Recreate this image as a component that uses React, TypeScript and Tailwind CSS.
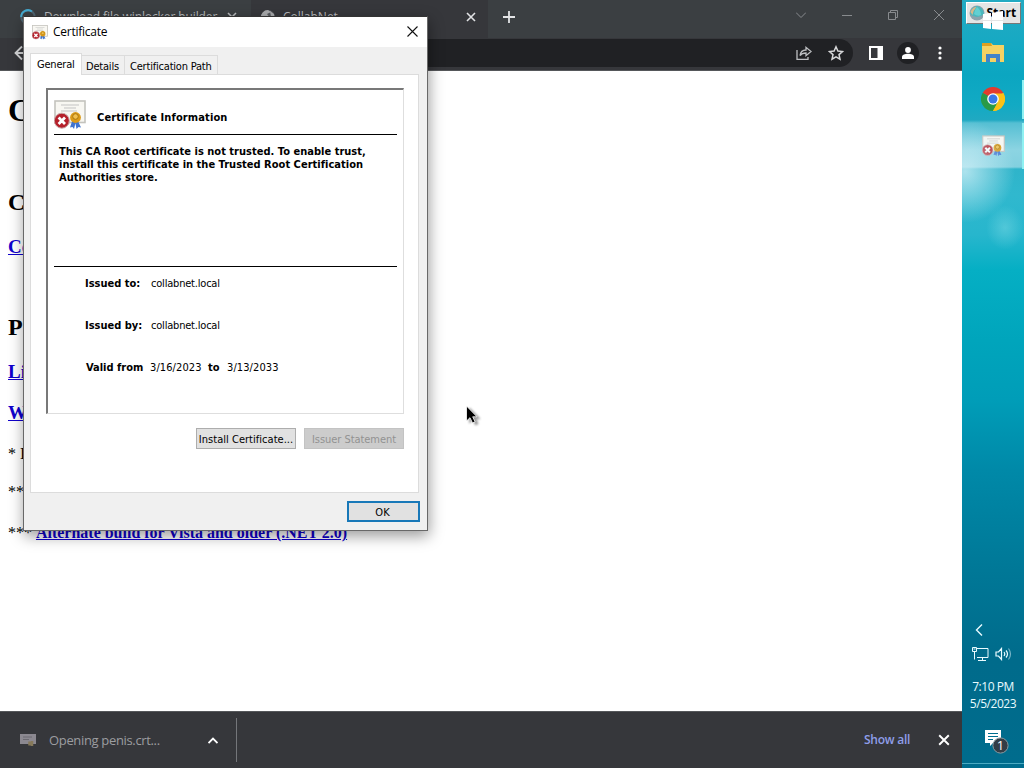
import React from 'react';

interface IconProps {
  className?: string;
}

const CertificateIcon: React.FC<IconProps> = ({ className }) => (
  <svg viewBox="0 0 32 30" className={className}>
    <rect x="1" y="1" width="30" height="21.500" fill="#f8f7f2" stroke="#c4c3bd" strokeWidth="1.6" />
    <path d="M7 5h18M10 8h12M7 11h16" stroke="#c3c3c3" strokeWidth="1" />
    <path d="M18.500 20l-2.500 7.500 2.500-.5 1.500 2 2-8zM23.500 20l3.500 7.500-2.500-.5-2 2-1.500-8z" fill="#3f74d0" />
    <circle cx="21.500" cy="17.500" r="5.400" fill="#dc9a17" />
    <circle cx="21.500" cy="16.500" r="2.800" fill="#f2c04e" stroke="#a87612" />
    <circle cx="7.800" cy="20.700" r="7.500" fill="#b5202b" stroke="#c9a9a9" strokeWidth="1" />
    <path d="M4.600 17.500l6.400 6.400M11 17.500l-6.400 6.400" stroke="#fff" strokeWidth="2.8" />
  </svg>
);

const CloseIcon: React.FC<IconProps> = ({ className }) => (
  <svg viewBox="0 0 10 10" className={className}>
    <path d="M1 1l8 8M9 1l-8 8" stroke="currentColor" strokeWidth="1.6" />
  </svg>
);

const ChromeIcon: React.FC<IconProps> = ({ className }) => (
  <svg viewBox="0 0 24 24" className={className}>
    <path d="M12 12L1.6 6A12 12 0 0 1 22.4 6z" fill="#e33b2e" />
    <path d="M12 12L22.4 6A12 12 0 0 1 12 24z" fill="#fbc116" />
    <path d="M12 12L12 24A12 12 0 0 1 1.6 6z" fill="#299a47" />
    <path d="M12 6.5h10.6L17 15z" fill="#fbc116" />
    <path d="M1.6 6l5.4 9 5-3z" fill="#299a47" />
    <path d="M7 15l5 2.5 5-2.5-5 9z" fill="#299a47" />
    <path d="M17 15l-5 9A12 12 0 0 0 22.4 6.5z" fill="#fbc116" />
    <circle cx="12" cy="12" r="5.8" fill="#fff" />
    <circle cx="12" cy="12" r="4.5" fill="#3978e7" />
  </svg>
);

const TabStrip = () => (
  <div className="flex h-[38px] shrink-0 bg-[#3b3f42] text-[12px] text-[#b8babd]">
    <div className="flex h-[34px] w-[251px] items-center pl-5">
      <svg viewBox="0 0 16 16" className="h-4 w-4">
        <circle cx="8" cy="8" r="6.8" fill="none" stroke="#4e6470" strokeWidth="2" />
        <path d="M1.2 8A6.8 6.8 0 0 1 12 2.5" fill="none" stroke="#43a9cf" strokeWidth="2" />
      </svg>
      <span className="ml-2 w-[174px] overflow-hidden whitespace-nowrap tracking-[-0.1px]">Download file winlocker builder</span>
      <CloseIcon className="ml-[9px] h-2.5 w-2.5" />
    </div>
    <div className="flex h-[38px] w-[237px] items-center bg-[#36373b] pb-1 pl-[9px]">
      <svg viewBox="0 0 16 16" className="h-4 w-4">
        <circle cx="8" cy="8" r="7" fill="#55585c" />
        <path d="M1 9A7 7 0 0 1 8 1l3 2-4 2 3 4-4 1z" fill="#a9abad" />
        <path d="M10 2l4 3 1 5-4-2z" fill="#a9abad" />
      </svg>
      <span className="ml-[7px] w-[183px]">CollabNet</span>
      <CloseIcon className="h-2.5 w-2.5 text-[#e2e3e5]" />
    </div>
    <div className="flex h-[34px] w-[42px] items-center justify-center">
      <svg viewBox="0 0 12 12" className="h-3 w-3">
        <path d="M6 0v12M0 6h12" stroke="#e3e4e6" strokeWidth="1.8" />
      </svg>
    </div>
    <div className="ml-auto flex h-[29px] items-center gap-[36px] pr-[18px] text-[#888b8e]">
      <svg viewBox="0 0 10 10" className="h-2.5 w-2.5">
        <path d="M0 2.5l5 5 5-5" fill="none" stroke="currentColor" />
      </svg>
      <svg viewBox="0 0 10 10" className="h-2.5 w-2.5">
        <path d="M0 5.5h10" stroke="currentColor" />
      </svg>
      <svg viewBox="0 0 10 10" className="h-2.5 w-2.5">
        <path d="M.5 2.5h7v7h-7zM2.5 2.5v-2h7v7h-2" fill="none" stroke="currentColor" />
      </svg>
      <svg viewBox="0 0 10 10" className="h-2.5 w-2.5">
        <path d="M0 0l10 10M10 0L0 10" stroke="currentColor" />
      </svg>
    </div>
  </div>
);

const Toolbar = () => (
  <div className="flex h-[33px] shrink-0 items-center border-b border-[#55575a] bg-[#36373b] pb-[3px]">
    <svg viewBox="0 0 16 16" className="ml-3.5 h-4 w-4">
      <path d="M15 8H2M8 1.5L1.5 8 8 14.5" fill="none" stroke="#d5d6d8" strokeWidth="1.8" />
    </svg>
    <div className="ml-10 flex h-[28px] flex-1 items-center justify-end gap-4 rounded-full bg-[#202124] pr-[9px]">
      <svg viewBox="0 0 16 16" className="h-4 w-4" fill="none" stroke="#bdbfc2" strokeWidth="1.3">
        <path d="M1 5v9.400h11V12" />
        <path d="M4 10.5C4.500 7 7 5 10 5V2.300L15 6.500l-5 4.200V8c-3 0-4.500.5-6 2.500z" />
      </svg>
      <svg viewBox="0 0 16 16" className="h-4 w-4">
        <path d="M8 1.8l1.9 4.3 4.600.4-3.500 3.100 1 4.600L8 11.800l-4 2.400 1-4.600L1.500 6.500l4.600-.4z" fill="none" stroke="#d7d8da" strokeWidth="1.5" />
      </svg>
    </div>
    <svg viewBox="0 0 14 14" className="ml-[16px] h-3.5 w-3.5">
      <path d="M0 0h14v14H0zM2 2v10h6.500V2z" fill="#fff" fillRule="evenodd" />
    </svg>
    <div className="ml-[14px] flex h-[22px] w-[22px] items-center justify-center rounded-full bg-[#202124]">
      <svg viewBox="0 0 12 12" className="h-3 w-3" fill="#fff">
        <circle cx="6" cy="3" r="2.900" />
        <path d="M0 12v-2c0-2 3-3.200 6-3.200s6 1.200 6 3.200v2z" />
      </svg>
    </div>
    <svg viewBox="0 0 4 14" className="ml-[19px] mr-5 h-3.5 w-1" fill="#fff">
      <circle cx="2" cy="2" r="1.600" />
      <circle cx="2" cy="7" r="1.600" />
      <circle cx="2" cy="12" r="1.600" />
    </svg>
  </div>
);

const Page = () => (
  <div className="flex min-h-0 flex-1 flex-col overflow-hidden whitespace-nowrap bg-white pl-2 font-['Liberation_Serif',serif] font-bold text-black">
    <div className="mt-[21px] h-9 text-[32px] leading-9">C</div>
    <div className="mt-[60px] h-7 text-[24px] leading-7">C</div>
    <div className="mt-[21px] h-5 text-[19px] leading-5 text-[#1000cc] underline">Co</div>
    <div className="mt-[56px] h-7 text-[24px] leading-7">P</div>
    <div className="mt-[21px] h-5 text-[19px] leading-5 text-[#1000cc] underline">Li</div>
    <div className="mt-[21px] h-5 text-[19px] leading-5 text-[#1000cc] underline">W</div>
    <div className="mt-[22px] h-[18px] text-[16px] font-normal leading-[18px]">* I</div>
    <div className="mt-[20px] h-[18px] text-[16px] font-normal leading-[18px]">**</div>
    <div className="mt-[23px] h-[18px] text-[16px] font-normal leading-[18px] tracking-[-0.01px]">
      *** <span className="font-bold text-[#1000cc] underline">Alternate build for Vista and older (.NET 2.0)</span>
    </div>
  </div>
);

const DownloadBar = () => (
  <div className="flex h-[57px] shrink-0 items-center border-t border-[#55575a] bg-[#36373b] text-[13px]">
    <svg viewBox="0 0 16 16" className="ml-5 h-4 w-4">
      <path d="M0 2h16v10H0z" fill="#8b8890" />
      <path d="M3 5h9M3 7.500h6" stroke="#6b6970" />
      <path d="M9.500 9.500v4M12 9v5" stroke="#86795a" strokeWidth="2.500" />
    </svg>
    <span className="ml-[13px] w-[159px] pt-[2px] tracking-[-0.34px] text-[#9c9da0]">Opening penis.crt...</span>
    <svg viewBox="0 0 10 7" className="h-[7px] w-2.5">
      <path d="M.5 6L5 1.500 9.500 6" fill="none" stroke="#fff" strokeWidth="1.800" />
    </svg>
    <div className="ml-[18px] h-[44px] w-px bg-[#74767a]" />
    <span className="ml-auto w-[74px] pb-px text-[12px] font-semibold tracking-[-0.25px] text-[#8f9ee9]">Show all</span>
    <CloseIcon className="mb-px mr-3 h-3 w-3 text-white" />
  </div>
);

const Taskbar = () => (
  <div className="relative flex w-[62px] shrink-0 flex-col items-center overflow-hidden bg-[linear-gradient(180deg,#23aac2_0px,#16a9c3_45px,#0ba6c1_75px,#12aac4_105px,#20a9c2_120px,#55bfd3_123px,#8cd4e2_150px,#82d0df_167px,#2fb4ca_169px,#30b8ce_195px,#27b6cd_235px,#05afc4_270px,#00a5bc_340px,#009db8_400px,#0089a8_470px,#007897_570px,#006b8b_660px,#006c8d_768px)] font-['Open_Sans',sans-serif] text-[#e9fbff]">
    <div className="absolute left-0 top-[122px] h-[110px] w-[62px] bg-[radial-gradient(ellipse_at_5%_45%,rgba(214,242,249,0.75),transparent_60%)]" />
    <div className="absolute left-[24px] top-[205px] h-[45px] w-[38px] bg-[radial-gradient(ellipse_at_50%_50%,rgba(130,220,230,0.45),transparent_70%)]" />
    <div className="absolute right-0 top-[80px] h-[39px] w-[2px] bg-[#8ff1f2]" />
    <div className="absolute right-0 top-[123px] h-[46px] w-[2px] bg-[#8ff1f2]" />
    <div className="mt-[2px] flex h-[22px] w-[55px] shrink-0 items-center border border-b-[#777] border-l-white border-r-[#777] border-t-white bg-[#e4e5e5] pl-[2px] text-[12px] font-bold text-black">
      <svg viewBox="0 0 16 16" className="h-4 w-4 shrink-0">
        <circle cx="8" cy="8" r="7.500" fill="#8ba3ad" />
        <path d="M1 9Q2 2 8 1q6 1 7 8-7 6-14 0z" fill="#4bb8bd" />
        <path d="M1.500 7q2-5 6-5-3 3-4 8z" fill="#d9b889" />
        <path d="M5 9q1-5 3-7 4 3 4 8-3 2-7-1z" fill="#62d0d2" />
      </svg>
      <span className="ml-[2px]">Start</span>
    </div>
    <svg viewBox="0 0 20 20" className="absolute left-[21px] top-[11px] h-5 w-5" fill="#fff">
      <path d="M0 3l8-1v7H0zM9 2l11-2v9H9zM0 10h8v8l-8-1zM9 10h11v9l-11-1z" />
    </svg>
    <svg viewBox="0 0 22 19" className="mt-[19px] h-[19px] w-[22px] shrink-0">
      <path d="M0 1q0-1 1-1h8l2 2h11v17H0z" fill="#f5d263" />
      <path d="M0 0h9l1 3H0z" fill="#dda020" />
      <path d="M4 19v-8h14v8h-4v-4H8v4z" fill="#4183c9" />
    </svg>
    <ChromeIcon className="mt-[25px] h-6 w-6 shrink-0" />
    <CertificateIcon className="mt-[24px] h-[22px] w-[23px] shrink-0" />
    <svg viewBox="0 0 8 12" className="mr-[28px] mt-[467px] h-3 w-2 shrink-0">
      <path d="M7 .5L1.500 6 7 11.500" fill="none" stroke="currentColor" strokeWidth="1.400" />
    </svg>
    <div className="mt-[10px] flex h-4 items-center gap-[6px] pr-[3px]">
      <svg viewBox="0 0 17 15" className="h-[15px] w-[17px]" fill="none" stroke="currentColor">
        <path d="M5 1.500h11v9H5M.5.500h4v4h-4zM2.500 4.500v8M10.500 10.500v3M6 13.500h8M1.500 2h2" />
      </svg>
      <svg viewBox="0 0 17 14" className="h-3.5 w-[17px]" fill="none" stroke="currentColor" strokeWidth="1.200">
        <path d="M1 5h2.500l3-3.500v11l-3-3.500H1zM9 5q1.500 2 0 4M11 3.500q3 3.500 0 7" />
        <path d="M13.500 1.500q4 5.500 0 11" opacity=".5" />
      </svg>
    </div>
    <div className="mt-[16px] whitespace-nowrap text-center text-[12px] leading-[17px] tracking-[-0.45px]">
      7:10 PM
      <br />
      5/5/2023
    </div>
    <svg viewBox="0 0 26 26" className="ml-[7px] mt-[17px] h-[26px] w-[26px] shrink-0">
      <path d="M1 1h16v13H9l-3 3v-3H1z" fill="#fff" />
      <path d="M4 4.500h10M4 7.500h10M4 10.500h5" stroke="#006d8e" />
      <circle cx="16.500" cy="16.500" r="7.600" fill="#343d46" stroke="#8b999f" />
      <text x="16.500" y="21" textAnchor="middle" fill="#fff" fontSize="13">1</text>
    </svg>
    <div className="absolute bottom-1 left-0 h-px w-full bg-[#4baac2]" />
  </div>
);

interface FieldProps {
  label: string;
  value: string;
}

const Field: React.FC<FieldProps> = ({ label, value }) => (
  <div className="flex h-[42px] leading-[14px]">
    <span className="w-[66px] font-bold">{label}</span>
    <span className="tracking-[-0.2px]">{value}</span>
  </div>
);

const CertificateDialog = () => (
  <div className="absolute left-[23px] top-4 flex h-[515px] w-[405px] flex-col whitespace-nowrap border border-[#686868] border-t-[#333] bg-[#f0f0f0] font-['DejaVu_Sans_Condensed','DejaVu_Sans',sans-serif] text-[11px] text-black shadow-[1px_5px_14px_rgba(0,0,0,0.4)]">
    <div className="flex h-[30px] shrink-0 items-center bg-white pl-2 font-['Open_Sans',sans-serif] text-[12px]">
      <CertificateIcon className="h-[15px] w-4" />
      <span className="ml-[5px] tracking-[-0.25px]">Certificate</span>
      <svg viewBox="0 0 11 11" className="mb-0.5 ml-auto mr-[9px] h-[11px] w-[11px]">
        <path d="M.5.500l10 10M10.500.500l-10 10" stroke="#111" strokeWidth="1.100" />
      </svg>
    </div>
    <div className="relative z-10 ml-[6px] mt-[6px] flex h-[22px] shrink-0 items-end tracking-[-0.2px]">
      <div className="h-[22px] w-[52px] border border-b-0 border-[#dcdcdc] bg-white pl-[6px] leading-[21px]">General</div>
      <div className="mb-px h-[19px] w-[43px] border border-b-0 border-l-0 border-[#dcdcdc] pl-1 leading-[21px]">Details</div>
      <div className="mb-px h-[19px] w-[93px] border border-b-0 border-l-0 border-[#dcdcdc] pl-[5px] leading-[21px]">Certification Path</div>
    </div>
    <div className="-mt-px ml-[6px] flex h-[419px] w-[389px] shrink-0 flex-col border border-[#dcdcdc] bg-white">
      <div className="ml-[15px] mt-[13px] flex h-[326px] w-[358px] shrink-0 flex-col border-b border-l-2 border-r border-t-2 border-b-[#dedede] border-l-[#787878] border-r-[#dedede] border-t-[#787878] pl-[6px] pr-[6px]">
        <div className="flex h-[45px] shrink-0 items-end border-b border-black pb-1">
          <CertificateIcon className="h-[30px] w-8" />
          <span className="mb-1 ml-[11px] font-bold tracking-[0.12px]">Certificate Information</span>
        </div>
        <div className="mt-[10px] h-[122px] shrink-0 border-b border-black pl-[5px] font-bold leading-[13px] tracking-[0.02px]">
          This CA Root certificate is not trusted. To enable trust,
          <br />
          install this certificate in the Trusted Root Certification
          <br />
          Authorities store.
        </div>
        <div className="mt-[10px] pl-[31px]">
          <Field label="Issued to:" value="collabnet.local" />
          <Field label="Issued by:" value="collabnet.local" />
          <div className="flex pl-px leading-[14px]">
            <span className="w-[64px] font-bold">Valid from</span>
            <span className="w-[58px] tracking-[0.1px]">3/16/2023</span>
            <span className="w-[19px] font-bold">to</span>
            <span className="tracking-[0.1px]">3/13/2033</span>
          </div>
        </div>
      </div>
      <div className="ml-[165px] mt-[14px] flex gap-2 text-center leading-[21px]">
        <div className="h-[21px] w-[100px] border border-[#adadad] bg-[#e1e1e1] tracking-[0.03px]">Install Certificate...</div>
        <div className="h-[21px] w-[100px] border border-[#c3c3c3] bg-[#cccccc] tracking-[-0.05px] text-[#929292]">Issuer Statement</div>
      </div>
    </div>
    <div className="ml-[323px] mt-[8px] h-[21px] w-[73px] shrink-0 border-2 border-[#1878b8] bg-[#e1e1e1] pr-0.5 text-center leading-[19px]">OK</div>
  </div>
);

const Cursor = () => (
  <svg viewBox="0 0 16 24" className="absolute left-[465px] top-[405px] h-6 w-4 drop-shadow-[3px_2px_1px_rgba(0,0,0,0.4)]">
    <path d="M1.500 1v15l3.500-3.300 2.500 5.300 2.600-1.200-2.400-5H12z" fill="#000" stroke="#fff" strokeWidth=".8" />
  </svg>
);

const App: React.FC = () => {
  return (
    <div className="relative flex h-[768px] w-[1024px] overflow-hidden bg-white">
      <div className="flex w-[962px] shrink-0 flex-col font-['Open_Sans',sans-serif]">
        <TabStrip />
        <Toolbar />
        <Page />
        <DownloadBar />
      </div>
      <Taskbar />
      <CertificateDialog />
      <Cursor />
    </div>
  );
};

export default App;
